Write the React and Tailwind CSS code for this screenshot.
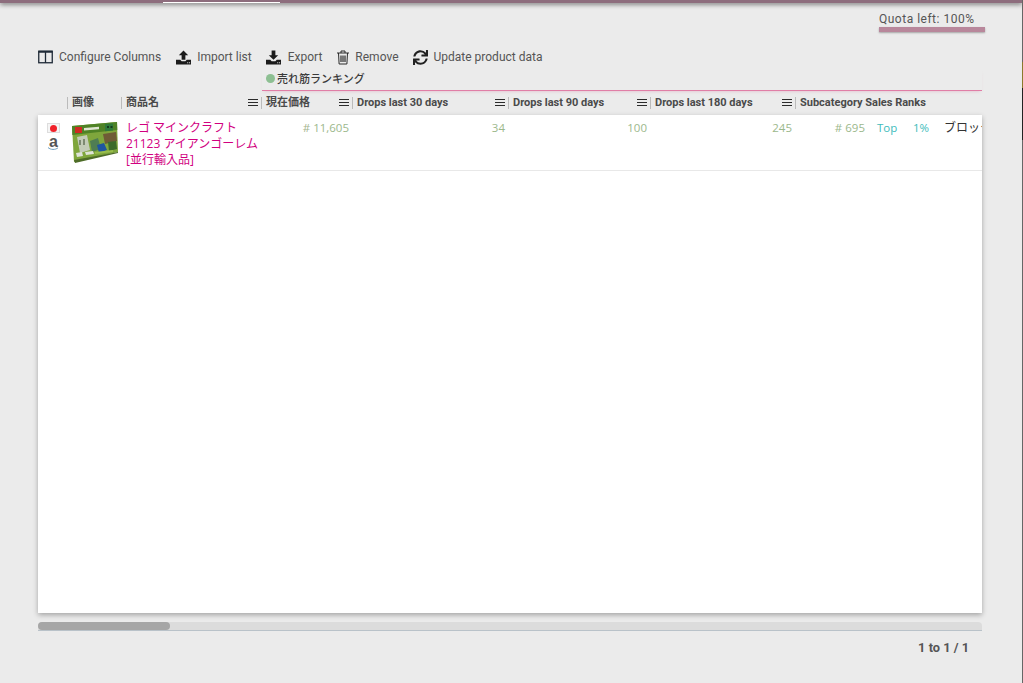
import { FaSync } from 'react-icons/fa'

const columns = [
  { label: '', width: 'w-[29px]' },
  { label: '画像', width: 'w-[54px]' },
  { label: '商品名', width: 'w-[140px]', menu: true },
  { label: '現在価格', width: 'w-[91px]', menu: true },
  { label: 'Drops last 30 days', width: 'w-[156px]', menu: true },
  { label: 'Drops last 90 days', width: 'w-[142px]', menu: true },
  { label: 'Drops last 180 days', width: 'w-[145px]', menu: true },
  { label: 'Subcategory Sales Ranks', width: 'w-[187px]' }
]

function ColumnsIcon() {
  return (
    <svg width="15" height="14" viewBox="0 0 15 14" fill="none" stroke="#1f2a37">
      <rect x="0.75" y="1.25" width="13.5" height="11.5" strokeWidth="1.3" />
      <path d="M0.5 1.75h14" strokeWidth="2" />
      <path d="M7.5 2v11" strokeWidth="1.3" />
    </svg>
  )
}

function TrayIcon({ down }) {
  return (
    <svg width="15" height="15" viewBox="0 0 16 15" fill="#1c1c1c">
      {down ? <path d="M6 0h4v5h3l-5 5-5-5h3z" /> : <path d="M8 0l5 5h-3v5H6V5H3z" />}
      <path d="M0 10h4.500l1.500 1.500h4L11.500 10H16v5H0z" />
      <path d="M12 12.500h1v1h-1zM14 12.500h1v1h-1z" fill="#eee" />
    </svg>
  )
}

function TrashIcon() {
  return (
    <svg width="14" height="15" viewBox="0 0 14 15" fill="none" stroke="#2a2a2a" strokeWidth="1">
      <path d="M1 3h12M2.500 3l.6 11h7.800l.6-11M5 3V1h4v2" />
      <path d="M5 5.500v6.500M7 5.500v6.500M9 5.500v6.500" strokeWidth="1.200" />
    </svg>
  )
}

function MenuIcon() {
  return (
    <svg width="10" height="8" viewBox="0 0 10 8" stroke="#2b2b2b" strokeWidth="1" className="mr-[3px] shrink-0">
      <path d="M0 .5h10M0 3.500h10M0 6.500h10" />
    </svg>
  )
}

function ToolButton({ icon, label, gap }) {
  return (
    <div className={`flex items-center ${gap}`}>
      {icon}
      <span>{label}</span>
    </div>
  )
}

function LegoBox() {
  return (
    <svg width="48" height="41" viewBox="0 0 48 41">
      <path d="M1 4L46 0l1 30L3 40z" fill="#7fa63c" />
      <path d="M1 4L46 0l.3 8L1.300 13z" fill="#4f8226" />
      <rect x="4" y="5" width="7" height="6" fill="#cf2a22" />
      <path d="M13 6l15-1.300v2.500l-15 1.300z" fill="#dfe5d2" />
      <path d="M34 2l8-.6v7l-8 .8z" fill="#2f7a3a" />
      <path d="M36 4h2v2h-2zM39.500 4h2v2h-2z" fill="#173a1c" />
      <path d="M6 15l10-2 3 15-10 3z" fill="#c3ccb8" />
      <path d="M8 18h2v5H8zM12 17h2v6h-2z" fill="#7d8a72" />
      <path d="M19 19l8-3 3 11-9 3z" fill="#4f7d52" />
      <path d="M26 23l7-2 3 7-8 3z" fill="#1f559f" />
      <path d="M32 12l13-2 1 9-12 3z" fill="#6f5c36" />
      <path d="M37 20l8-1 1 8-8 2z" fill="#3c6b2a" />
      <path d="M5 31l6-1 1 4-6 1zM14 30l8-1 1 3-8 1z" fill="#dfe3d8" />
      <path d="M24 30l18-2v2l-18 2z" fill="#99bd4c" />
      <path d="M3 38l44-8v1L4 41z" fill="#4e6c28" />
    </svg>
  )
}

export default function App() {
  return (
    <div className="flex h-[683px] w-[1023px] overflow-hidden bg-[#ebebeb] font-['Roboto',sans-serif] text-[12px] text-[#444]">
      <div className="w-[1022px] shrink-0">
        {/* top bar */}
        <div className="flex h-[3px] bg-[#8d6d7d] shadow-[0_1px_5px_rgba(0,0,0,0.7)]">
          <div className="ml-[163px] mt-[2px] h-[1px] w-[117px] bg-white" />
        </div>

        <div className="flex justify-end pr-[37px] pt-[8px]">
          <div className="w-[106px]">
            <div className="h-[16px] leading-[16px] tracking-[0.5px] text-[#555]">Quota left: 100%</div>
            <div className="h-[5px] bg-[#b8879b] shadow-[0_1px_2px_rgba(0,0,0,0.3)]" />
          </div>
        </div>

        <div className="pl-[38px]">
          {/* toolbar */}
          <div className="mt-[15px] flex h-[20px] items-center gap-[14px] text-[#555]">
            <div className="mr-[1px]">
              <ToolButton icon={<ColumnsIcon />} label="Configure Columns" gap="gap-[6px]" />
            </div>
            <ToolButton icon={<TrayIcon />} label="Import list" gap="gap-[6px]" />
            <ToolButton icon={<TrayIcon down />} label="Export" gap="gap-[7px]" />
            <ToolButton icon={<TrashIcon />} label="Remove" gap="gap-[5px]" />
            <ToolButton icon={<FaSync className="h-[15px] w-[15px] text-[#222]" />} label="Update product data" gap="gap-[6px]" />
          </div>

          {/* column group */}
          <div className="ml-[224px] mt-[3px] flex h-[21px] w-[720px] items-center gap-[2px] border-b border-[#e07ea6] pb-[4px] font-['Noto_Sans_CJK_JP',sans-serif] text-[11px] font-medium text-[#3a3a3a] shadow-[0_2px_3px_-2px_rgba(224,126,166,0.5)]">
            <span className="ml-[4px] h-[9px] w-[9px] rounded-full bg-[#8dbf92]" />
            <span>売れ筋ランキング</span>
          </div>

          {/* column headers */}
          <div className="flex h-[24px] w-[944px] items-center overflow-hidden font-bold text-[#4a4a4a]">
            {columns.map((col, i) => (
              <div key={i} className={`flex h-[12px] shrink-0 items-center justify-between border-l border-[#bbb] pl-[4px] ${i === 0 ? 'border-l-0' : ''} ${col.width}`}>
                <span className="whitespace-nowrap font-['Roboto','Noto_Sans_CJK_JP',sans-serif] text-[11px]">{col.label}</span>
                {col.menu && <MenuIcon />}
              </div>
            ))}
          </div>

          {/* table */}
          <div className="h-[498px] w-[944px] overflow-hidden bg-white shadow-[0_2px_5px_rgba(0,0,0,0.3)]">
            <div className="flex h-[56px] w-[1000px] border-b border-[#e8e8e8] font-['Open_Sans','Noto_Sans_CJK_JP',sans-serif] text-[12px]">
              <div className="flex w-[29px] shrink-0 flex-col items-center pl-[2px] pt-[8px]">
                <div className="flex h-[10px] w-[13px] items-center justify-center border border-[#ddd] bg-[#f5f5f5]">
                  <span className="h-[7px] w-[7px] rounded-full bg-[#f0222a]" />
                </div>
                <div className="relative mt-[1px] h-[16px] font-['Liberation_Sans',sans-serif] text-[16px] font-bold leading-[15px] text-[#555]">
                  a
                  <svg width="12" height="4" viewBox="0 0 11 4" className="absolute left-[-2px] top-[13px]">
                    <path d="M.5 .5C3 3 8 3 10.500 .8" fill="none" stroke="#6f9fc0" strokeWidth="1" />
                  </svg>
                </div>
              </div>
              <div className="w-[54px] shrink-0 pl-[4px] pt-[7px]">
                <LegoBox />
              </div>
              <div className="w-[140px] shrink-0 pl-[5px] pt-[5px] leading-[16px] text-[#d1007f]">
                <div>レゴ マインクラフト</div>
                <div>21123 アイアンゴーレム</div>
                <div>[並行輸入品]</div>
              </div>
              <div className="w-[91px] shrink-0 pr-[3px] pt-[5px] text-right text-[11.5px] leading-[16px] text-[#9cb88c]">
                <span className="text-[#a4b58f]"># </span>11,605
              </div>
              <div className="w-[156px] shrink-0 pr-[3px] pt-[5px] text-right text-[11.5px] leading-[16px] text-[#9cb88c]">34</div>
              <div className="w-[142px] shrink-0 pr-[3px] pt-[5px] text-right text-[11.5px] leading-[16px] text-[#9cb88c]">100</div>
              <div className="w-[145px] shrink-0 pr-[3px] pt-[5px] text-right text-[11.5px] leading-[16px] text-[#9cb88c]">245</div>
              <div className="flex shrink-0 pt-[5px] text-[11.5px] leading-[16px]">
                <span className="w-[70px] text-right text-[#9cb88c]"># 695</span>
                <span className="ml-[12px] w-[36px] text-[#40bcbc]">Top</span>
                <span className="w-[31px] text-[#40bcbc]">1%</span>
                <span className="text-[12px] text-[#333]">ブロック</span>
              </div>
            </div>
          </div>

          {/* horizontal scrollbar */}
          <div className="mt-[9px] h-[9px] w-[944px] rounded-t-[4px] border-b border-[#b9c2c9] bg-[#dcdcdc]">
            <div className="h-[8px] w-[132px] rounded-[4px] bg-[#a6a6a6]" />
          </div>

          <div className="mt-[9px] w-[931px] text-right text-[12.8px] font-bold leading-[16px] text-[#555]">1 to 1 / 1</div>
        </div>
      </div>

      {/* sliver of the window behind */}
      <div className="flex w-[1px] shrink-0 flex-col bg-[#666]">
        <div className="h-[62px]" />
        <div className="h-[26px] bg-[#8a7a2c]" />
        <div className="h-[52px] bg-[#222]" />
      </div>
    </div>
  )
}
